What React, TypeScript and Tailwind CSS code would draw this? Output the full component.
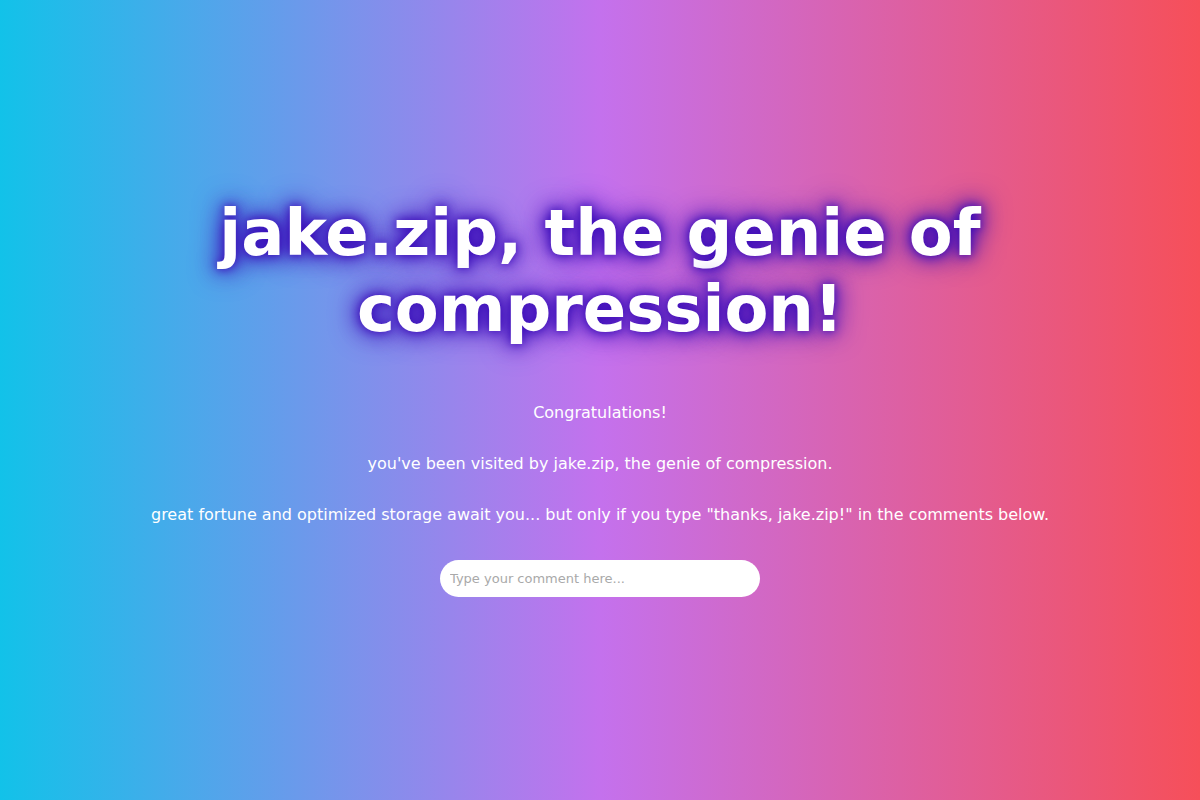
import React from "react";

export default function App() {
  return (
    <div className="min-h-screen w-full flex flex-col items-center justify-center pb-[8px] bg-[linear-gradient(to_right,#12c2e9,#c471ed,#f64f59)] text-white text-center font-['DejaVu_Sans',sans-serif]">
      <h1 className="text-[64px] leading-[76px] font-bold px-[200px] [text-shadow:0_0_10px_#3a0cb8,0_0_20px_#3a0cb8,0_0_30px_#3a0cb8]">
        jake.zip, the genie of compression!
      </h1>
      <p className="mt-[56px] text-base leading-[19px]">Congratulations!</p>
      <p className="mt-[32px] text-base leading-[19px]">
        you've been visited by jake.zip, the genie of compression.
      </p>
      <p className="mt-[32px] text-base leading-[19px]">
        great fortune and optimized storage await you... but only if you type "thanks, jake.zip!" in the comments below.
      </p>
      <input
        type="text"
        placeholder="Type your comment here..."
        className="mt-[36px] w-[320px] h-[37px] rounded-full bg-white px-[10px] text-[13px] text-gray-800 placeholder:text-[#a9a9a9] outline-none font-['DejaVu_Sans',sans-serif]"
      />
    </div>
  );
}
